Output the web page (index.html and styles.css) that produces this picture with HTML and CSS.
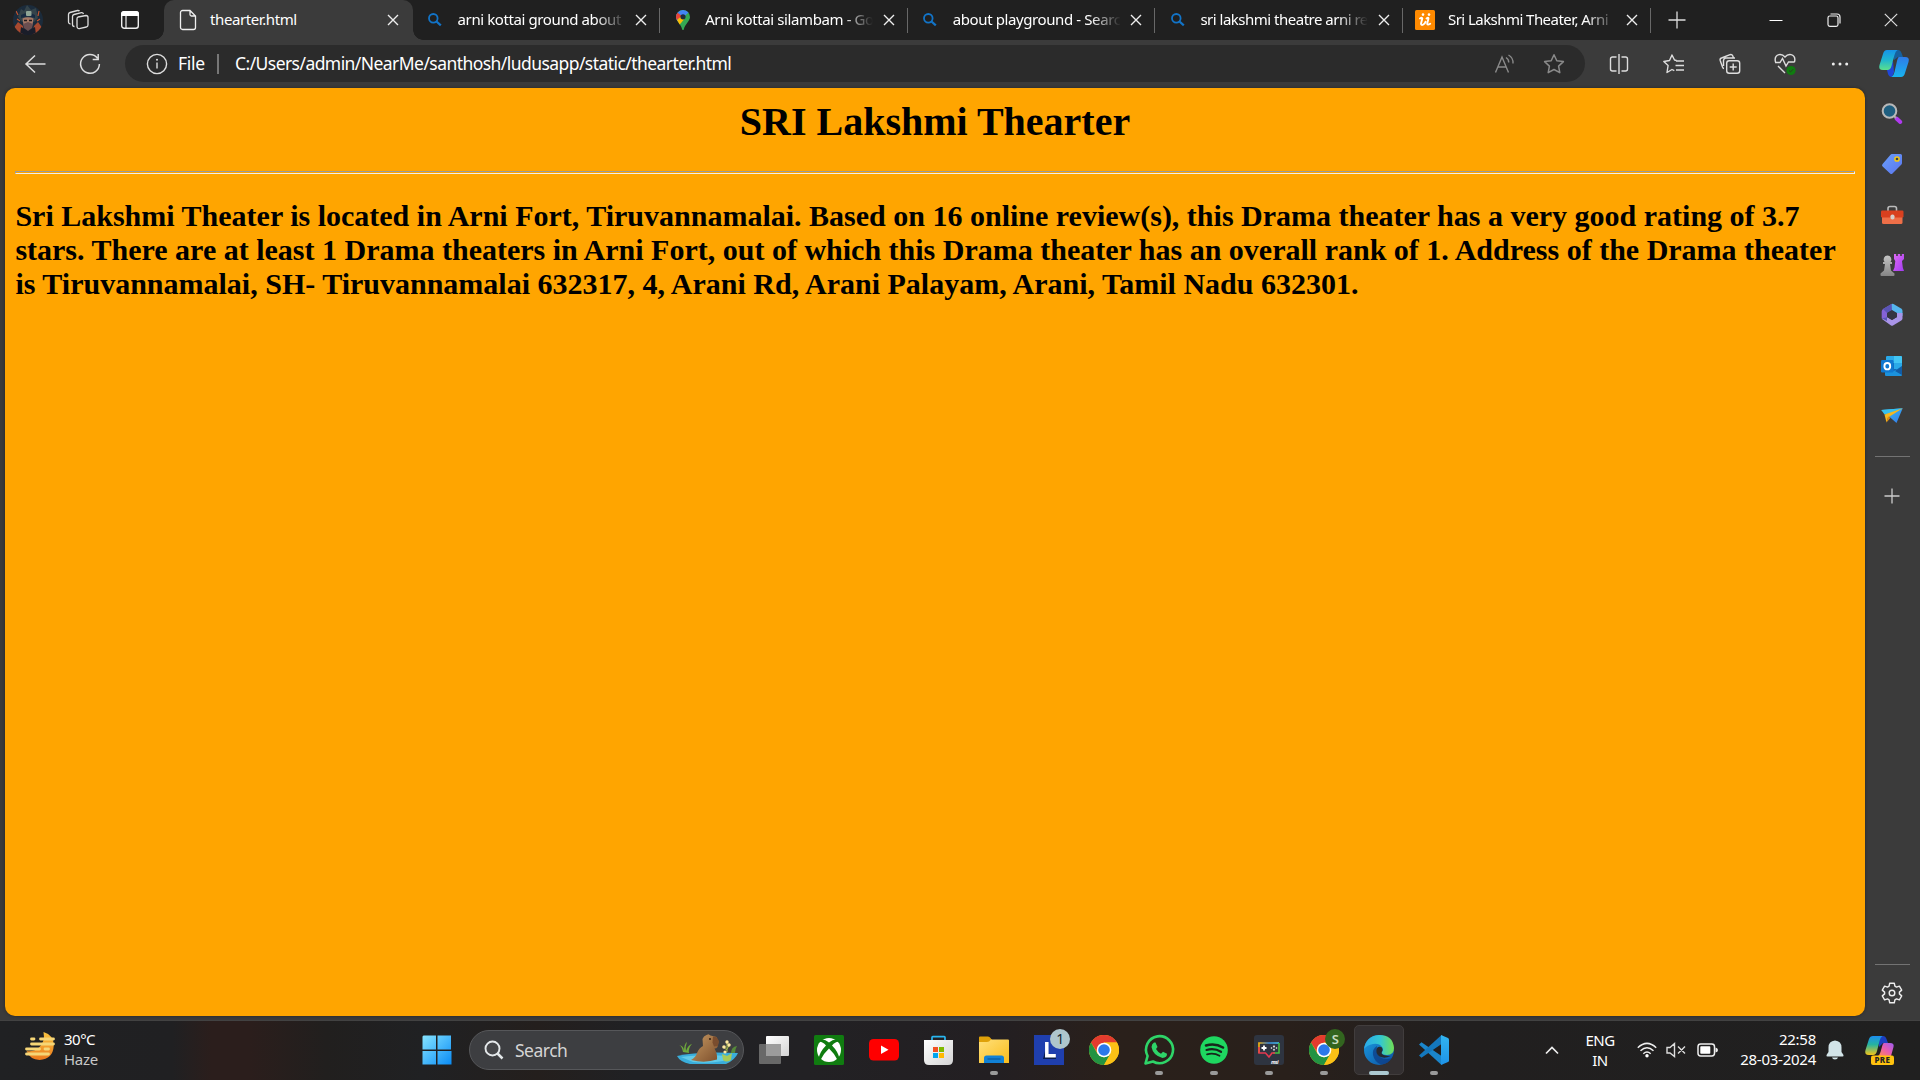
FILE: index.html
```html
<!DOCTYPE html>
<html lang="en">
<head>
<meta charset="utf-8">
<title>thearter.html</title>
<link rel="stylesheet" href="styles.css">
</head>
<body>
<svg class="defs" width="0" height="0" aria-hidden="true">
  <defs>
    <linearGradient id="cpBlue" x1="0" y1="0" x2="0" y2="1"><stop offset="0" stop-color="#1693e8"/><stop offset=".5" stop-color="#1fb5cf"/><stop offset="1" stop-color="#5be08c"/></linearGradient>
    <linearGradient id="cpRight" x1="0" y1="0" x2="0" y2="1"><stop offset="0" stop-color="#2f7be8"/><stop offset="1" stop-color="#18b4ef"/></linearGradient>
    <linearGradient id="cpRain" x1="0" y1="0" x2="0" y2="1"><stop offset="0" stop-color="#1b8df0"/><stop offset=".45" stop-color="#25b4a0"/><stop offset="1" stop-color="#f5c518"/></linearGradient>
    <linearGradient id="cpPink" x1="1" y1="0" x2="0" y2="1"><stop offset="0" stop-color="#9b5cf0"/><stop offset=".5" stop-color="#e85cb0"/><stop offset="1" stop-color="#ff8a50"/></linearGradient>
    <linearGradient id="win" x1="0" y1="0" x2="1" y2="1"><stop offset="0" stop-color="#86e4ff"/><stop offset="1" stop-color="#0a8cf5"/></linearGradient>
    <linearGradient id="tag" x1="0" y1="0" x2="1" y2="1"><stop offset="0" stop-color="#6aa0fa"/><stop offset="1" stop-color="#5a74ee"/></linearGradient>
    <linearGradient id="purple" x1="0" y1="0" x2="1" y2="1"><stop offset="0" stop-color="#e06cf5"/><stop offset="1" stop-color="#a23cf0"/></linearGradient>
    <linearGradient id="grey" x1="0" y1="0" x2="0" y2="1"><stop offset="0" stop-color="#c4c4c4"/><stop offset="1" stop-color="#858585"/></linearGradient>
    <linearGradient id="white" x1="0" y1="0" x2="1" y2="1"><stop offset="0" stop-color="#fff"/><stop offset="1" stop-color="#d4d4d4"/></linearGradient>
    <linearGradient id="moon" x1="0" y1="0" x2="0" y2="1"><stop offset="0" stop-color="#f8c440"/><stop offset="1" stop-color="#ec7a1c"/></linearGradient>
    <linearGradient id="folder" x1="0" y1="0" x2="1" y2="1"><stop offset="0" stop-color="#ffe07a"/><stop offset="1" stop-color="#f9bc1c"/></linearGradient>
    <linearGradient id="edgeTop" x1="0" y1="0" x2="1" y2="0"><stop offset="0" stop-color="#2aa9ea"/><stop offset=".55" stop-color="#34c8cf"/><stop offset="1" stop-color="#72e052"/></linearGradient>
    <linearGradient id="edgeLow" x1="0" y1="0" x2="1" y2="1"><stop offset="0" stop-color="#1b9de2"/><stop offset="1" stop-color="#0c4fa0"/></linearGradient>
    <linearGradient id="vs" x1="0" y1="0" x2="0" y2="1"><stop offset="0" stop-color="#32b5f1"/><stop offset="1" stop-color="#1e93e8"/></linearGradient>
    <linearGradient id="fur" x1="0" y1="0" x2="1" y2="1"><stop offset="0" stop-color="#c79a63"/><stop offset="1" stop-color="#7d4f2c"/></linearGradient>
    <linearGradient id="plane" x1="0" y1="0" x2="1" y2="1"><stop offset="0" stop-color="#35c8f5"/><stop offset="1" stop-color="#3577ea"/></linearGradient>
    <linearGradient id="msi" x1="0" y1="0" x2="1" y2="0"><stop offset="0" stop-color="#f0b010"/><stop offset=".5" stop-color="#3c8ee0"/><stop offset="1" stop-color="#45c8f0"/></linearGradient>
    <radialGradient id="face"><stop offset="0" stop-color="#a07868"/><stop offset=".45" stop-color="#5a4548"/><stop offset="1" stop-color="#16283a"/></radialGradient>
    <clipPath id="round"><circle cx="15" cy="15" r="15"/></clipPath>
    <symbol id="close" viewBox="0 0 12 12"><path d="M1 1l10 10M11 1L1 11" fill="none" stroke="#eee" stroke-width="1.4"/></symbol>
    <symbol id="bing" viewBox="0 0 14 14"><circle cx="5.3" cy="5.3" r="4.3" fill="none" stroke="#1274c8" stroke-width="1.8"/><path d="M8.5 8.5L12.8 12.4" stroke="#1274c8" stroke-width="2.2"/></symbol>
    <symbol id="chrome" viewBox="0 0 30 30">
      <circle cx="15" cy="15" r="15" fill="#fbc116"/>
      <path d="M2 7.5A15 15 0 0 1 28 7.5H15L9 18.5z" fill="#e33b2e"/>
      <path d="M2 7.5L8.5 18.7L15 22.5L21.5 18.7L15 30A15 15 0 0 1 2 7.5z" fill="#229342"/>
      <path d="M28 7.5H15l6.5 11.2L15 30A15 15 0 0 0 28 7.5z" fill="#fbc116"/>
      <circle cx="15" cy="15" r="7.3" fill="#fff"/><circle cx="15" cy="15" r="5.8" fill="#2b78ea"/>
    </symbol>
  </defs>
</svg>

<div class="titlebar">
  <div class="tb-cell tb-avatar"><svg width="30" height="30" viewBox="0 0 30 30"><g clip-path="url(#round)"><rect width="30" height="30" fill="#1b2b3b"/><path d="M0 24l5-7 5 4 1 9H0zM30 24l-5-7-4 4-2 9h11z" fill="#a8492f"/><path d="M7 30l1-8 7 4 7-4 1 8z" fill="#1a1d29"/><path d="M5 12l3-8 3 2 3-6 4 5 5-2 2 10-4 4H9z" fill="#34434a"/><path d="M8 10q7-4 14 0v3q-7-3-14 0z" fill="#172a42"/><rect x="13" y="6" width="5.500" height="5" rx="1" fill="#8fa596"/><path d="M9.500 13.500q5.500-2.500 11 0l-1 6.500-4.500 4-4.500-4z" fill="#a57866"/><path d="M10 19l5-2 5 2-1 4-4 3-4-3z" fill="#6a4e50"/><path d="M11 15.500h3M16 15.500h3" stroke="#21191c" stroke-width="1.300"/><path d="M3 6l2 4M26 6l-1 5M4 14l3 2M27 14l-3 2" stroke="#c4552f" stroke-width="1.200"/></g></svg></div>
  <div class="tb-cell tb-work"><svg width="22" height="22" viewBox="0 0 22 22" fill="none" stroke="#ddd" stroke-width="1.300"><path d="M11 8l8-1.500a2 2 0 0 1 2 2v7.500a2 2 0 0 1-1.700 2l-7 1.600a2 2 0 0 1-2.300-2V10a2 2 0 0 1 1-2z"/><path d="M7.500 17.500a2 2 0 0 1-2-2V7.500a2 2 0 0 1 1.500-2l7.500-1.800q1.500-.2 2 1.300"/><path d="M3.500 15a2 2 0 0 1-2-2V5.500a2 2 0 0 1 1.500-2L10.500 1.500q1.500-.1 2 .7"/></svg></div>
  <div class="tb-cell tb-actions"><svg width="20" height="20" viewBox="0 0 20 20"><rect x="1.700" y="1.700" width="16.600" height="16.600" rx="2.500" fill="none" stroke="#eee" stroke-width="1.400"/><path d="M1 6V4a3 3 0 0 1 3-3h12a3 3 0 0 1 3 3v2z" fill="#fff"/><path d="M6 6v12" stroke="#eee" stroke-width="1.200"/></svg></div>
  <div class="tabs">
    <div class="tab tab-active"><span class="tab-icon"><svg width="18" height="22" viewBox="0 0 18 22" fill="none" stroke="#eee" stroke-width="1.300"><path d="M3.500 1.500h7.500l5.500 5.500v11.500a2 2 0 0 1-2 2h-11a2 2 0 0 1-2-2v-15a2 2 0 0 1 2-2zM11 1.500v4a1.500 1.500 0 0 0 1.500 1.500h4"/></svg></span><span class="tab-title">thearter.html</span><svg class="tab-close" width="12" height="12"><use href="#close"/></svg></div>
    <div class="tab"><span class="tab-icon"><svg width="14" height="14"><use href="#bing"/></svg></span><span class="tab-title fade">arni kottai ground about</span><svg class="tab-close" width="12" height="12"><use href="#close"/></svg></div>
    <div class="tab"><span class="tab-icon"><svg width="14" height="20" viewBox="0 0 14 20"><path d="M7 0a7 7 0 0 1 7 7c0 4-5 7-6.200 12.500Q7 20.500 6.200 19.500C5 14 0 11 0 7a7 7 0 0 1 7-7z" fill="#34a853"/><path d="M1.500 2.700A7 7 0 0 1 12.500 2.500L2.500 12Q0 9.500 0 7q0-2.500 1.500-4.300z" fill="#4285f4"/><path d="M1.500 2.700L6 6 1 10Q0 8.500 0 7q0-2.500 1.500-4.300z" fill="#ea4335"/><path d="M1 10L5 6.500l3 3-4.300 5z" fill="#fbbc04"/><circle cx="7" cy="6.800" r="2.600" fill="#202d3d"/></svg></span><span class="tab-title fade">Arni kottai silambam - Go</span><svg class="tab-close" width="12" height="12"><use href="#close"/></svg></div>
    <div class="tab"><span class="tab-icon"><svg width="14" height="14"><use href="#bing"/></svg></span><span class="tab-title fade">about playground - Searc</span><svg class="tab-close" width="12" height="12"><use href="#close"/></svg></div>
    <div class="tab"><span class="tab-icon"><svg width="14" height="14"><use href="#bing"/></svg></span><span class="tab-title fade tight">sri lakshmi theatre arni re</span><svg class="tab-close" width="12" height="12"><use href="#close"/></svg></div>
    <div class="tab"><span class="tab-icon"><svg width="20" height="20" viewBox="0 0 20 20"><rect width="20" height="20" rx="1.500" fill="#ff8a00"/><path d="M5 8.500q2-1.500 2.300 0L6 13.500q0 2 2 1.200 2-1 2.500-3M11.500 8.500q2-1.500 2 0L12.200 13.500q0 2.200 3 .2" fill="none" stroke="#fff" stroke-width="1.900" stroke-linecap="round"/><circle cx="8" cy="4.600" r="1.300" fill="#fff"/><circle cx="14" cy="4.600" r="1.300" fill="#fff"/></svg></span><span class="tab-title fade tighter">Sri Lakshmi Theater, Arni</span><svg class="tab-close" width="12" height="12"><use href="#close"/></svg></div>
  </div>
  <div class="tb-cell tb-new"><svg width="18" height="18" viewBox="0 0 18 18"><path d="M9 .5v17M.5 9h17" stroke="#ddd" stroke-width="1.300"/></svg></div>
  <div class="win-controls">
    <span class="win-btn"><svg width="14" height="14" viewBox="0 0 14 14"><path d="M.5 7.500h13" stroke="#fff" stroke-width="1"/></svg></span>
    <span class="win-btn"><svg width="14" height="14" viewBox="0 0 14 14" fill="none" stroke="#eee" stroke-width="1.200"><rect x="1" y="3" width="10" height="10.300" rx="1.800"/><path d="M3.500 1h6.500a3 3 0 0 1 3 3v6.500"/></svg></span>
    <span class="win-btn"><svg width="14" height="14" viewBox="0 0 14 14"><path d="M.8 .8l12.400 12.400M13.200 .8L.8 13.200" stroke="#ddd" stroke-width="1.200"/></svg></span>
  </div>
</div>

<div class="toolbar">
  <div class="tool-cell nav-back"><svg width="22" height="20" viewBox="0 0 22 20" fill="none" stroke="#ddd" stroke-width="1.500"><path d="M11 1.500L2 10l9 8.500M2 10h19.500"/></svg></div>
  <div class="tool-cell nav-reload"><svg width="22" height="22" viewBox="0 0 22 22" fill="none" stroke="#ddd" stroke-width="1.500"><path d="M18.500 5.200A9.400 9.400 0 1 0 20.400 11M19.200 1v5.500h-5.500"/></svg></div>
  <div class="address">
    <svg class="info" width="22" height="22" viewBox="0 0 22 22"><circle cx="11" cy="11" r="9.600" fill="none" stroke="#ddd" stroke-width="1.400"/><path d="M11 9.500v6" stroke="#ddd" stroke-width="1.400"/><circle cx="11" cy="6.700" r="1" fill="#ddd"/></svg>
    <span class="scheme">File</span>
    <span class="address-sep"></span>
    <span class="url">C:/Users/admin/NearMe/santhosh/ludusapp/static/thearter.html</span>
    <svg class="read" width="22" height="20" viewBox="0 0 22 20" fill="none" stroke="#8a8a8a" stroke-width="1.400"><path d="M1.500 18.500L8 3l6.500 15.500M4 13h8M12 3.500q3 2 2.700 5M14.500 1q5 3 4.500 8.500"/></svg>
    <svg class="star" width="22" height="22" viewBox="0 0 22 22" fill="none" stroke="#8a8a8a" stroke-width="1.500" stroke-linejoin="round"><path d="M11 1.800l2.800 6 6.600.8-4.800 4.500 1.200 6.600L11 16.500l-5.800 3.200 1.200-6.600L1.600 8.600l6.600-.8z"/></svg>
  </div>
  <div class="tools">
    <span class="tool-cell"><svg width="20" height="20" viewBox="0 0 20 20" fill="none" stroke="#ddd" stroke-width="1.400"><path d="M7.500 3H3.500a2 2 0 0 0-2 2v10a2 2 0 0 0 2 2h4M12.500 3h4a2 2 0 0 1 2 2v10a2 2 0 0 1-2 2h-4M10 0v20"/></svg></span>
    <span class="tool-cell"><svg width="22" height="20" viewBox="0 0 22 20" fill="none" stroke="#ddd" stroke-width="1.400" stroke-linejoin="round"><path d="M13.500 6.500L11.500 6 9 1 6.500 6.500.8 7.500l4.300 4L4 18.500l5-3 2.300 1.200M13 7h8M12.500 11.500H21M13 16h8"/></svg></span>
    <span class="tool-cell"><svg width="22" height="22" viewBox="0 0 22 22" fill="none" stroke="#ddd" stroke-width="1.400"><rect x="7.700" y="7.700" width="13" height="12.600" rx="2.500"/><path d="M14.200 10.500v7M10.700 14h7M5 15.500q-1 0-1.500-1.500L1.200 7.500A2 2 0 0 1 2.500 5L11 1.700q2-.5 2.700 1L14.500 5M4.500 13V7.500q0-2 2-2.500L16 5"/></svg></span>
    <span class="tool-cell"><svg width="22" height="22" viewBox="0 0 22 22" fill="none" stroke="#ddd" stroke-width="1.400"><path d="M1.500 9Q0 3 5 1.600 8.500 1 11 4q2.500-3 6-2.400Q22 3 20.500 9M1 9.500h5L8.500 5.500 12 13l2.500-4h6M4 13l7 7"/><circle cx="17" cy="17.500" r="4.600" fill="#107c10" stroke="none"/><path d="M15 17.500l1.500 1.400 2.700-2.700" stroke="#2b3a24" stroke-width="1"/></svg></span>
    <span class="tool-cell"><svg width="18" height="6" viewBox="0 0 18 6" fill="#eee"><circle cx="2.300" cy="3" r="1.500"/><circle cx="9" cy="3" r="1.500"/><circle cx="15.700" cy="3" r="1.500"/></svg></span>
    <span class="tool-cell tool-copilot"><svg width="30" height="27" viewBox="0 0 30 27"><path d="M13 0h6q2.500 0 3.500 3L24 7h-5l-4 3z" fill="#16609e"/><path d="M8 20l6-9 1 11-2 5q-3 0-4-3z" fill="#1f46d8"/><path d="M8 0h10.500q-2 1-3 5l-3 11q-1 4-4 4H4Q-1 20 .5 15L4 4Q5 0 8 0z" fill="url(#cpBlue)"/><path d="M20 7h6q5 0 3.500 5l-3.500 11q-1 4-4 4h-9.500q2-1 3-5l2.500-11q1-4 2-4z" fill="url(#cpRight)"/></svg></span>
  </div>
</div>

<div class="browser-body">
  <div class="page">
    <h1>SRI Lakshmi Thearter</h1>
    <hr>
    <h2>Sri Lakshmi Theater is located in Arni Fort, Tiruvannamalai. Based on 16 online review(s), this Drama theater has a very good rating of 3.7 stars. There are at least 1 Drama theaters in Arni Fort, out of which this Drama theater has an overall rank of 1. Address of the Drama theater is Tiruvannamalai, SH- Tiruvannamalai 632317, 4, Arani Rd, Arani Palayam, Arani, Tamil Nadu 632301.</h2>
  </div>
  <div class="sidebar">
    <span class="side-cell"><svg width="22" height="22" viewBox="0 0 22 22"><path d="M15.500 15.500l3.800 3.500" stroke="#b03af0" stroke-width="4" stroke-linecap="round"/><path d="M12 12l3 3" stroke="#aaa" stroke-width="2"/><circle cx="8.500" cy="8" r="6.800" fill="#1f5f80" stroke="#b8b8b8" stroke-width="2"/></svg></span>
    <span class="side-cell"><svg width="22" height="22" viewBox="0 0 22 22"><path d="M11 1h8.500A1.500 1.500 0 0 1 21 2.500V10q0 1-.8 1.800l-8.700 8.700q-1.200 1-2.400 0l-7.500-7q-1.200-1.200 0-2.500L9.300 2Q10 1 11 1z" fill="url(#tag)"/><circle cx="16" cy="6" r="2.100" fill="#345" stroke="#f5c812" stroke-width="1.500"/></svg></span>
    <span class="side-cell"><svg width="24" height="20" viewBox="0 0 24 20"><path d="M8 6V3.500Q8 1.500 10 1.500h4.500q2 0 2 2V6" fill="none" stroke="#bbb" stroke-width="1.600"/><rect x="2" y="9" width="20.500" height="10" rx="1.500" fill="#ee6f48"/><rect x="1" y="5.500" width="22.500" height="7" rx="1.200" fill="#d9401f"/><rect x="10.500" y="9.500" width="4" height="5" rx="1.800" fill="#d6cfcb"/></svg></span>
    <span class="side-cell"><svg width="24" height="24" viewBox="0 0 24 24"><path d="M14 1h2.200v2h1.600V1h2.400v2h1.600V1H24v5l-2 2 .8 6.500 1.200 3.500H13l1.500-3.500.8-6.500L14 6z" fill="url(#purple)"/><path d="M7.500 2.500a4 4 0 0 1 3 6.500H12v2h-2l1 6.500 3.500 3v1.500q0 1-1 1H1.500q-1 0-1-1V20.500L4 17.500 5 11H3V9h1.500a4 4 0 0 1 3-6.500z" fill="url(#grey)"/></svg></span>
    <span class="side-cell"><svg width="22" height="22" viewBox="0 0 22 22"><path d="M10.500 0L2 5Q.7 6 .7 7.500v7L6 17V9l5-3z" fill="#8562d6"/><path d="M10.500 0q1-.5 2 0l8 4.700Q21.500 5.500 21.500 7v5L15 9l-5-3z" fill="#55b5ee"/><path d="M21.500 9v5.500q0 1.200-1.200 2L12 21.500q-1 .5-2 0L1 15l5-2 5 3 5-3V9z" fill="#a994e8"/><path d="M10.500 0L2 5l4 4 5-3zM1 14.500l5 2.500v-4z" fill="#5a55b5"/><path d="M11 6l5 3v4l-5 3-5-3V9z" fill="#353542"/></svg></span>
    <span class="side-cell"><svg width="22" height="22" viewBox="0 0 22 22"><rect x="5" y="1" width="16" height="18" rx="1" fill="#1268ba"/><path d="M6 1h7v7H5V2zM13 8h8v6h-8z" fill="#2aa9e8"/><path d="M13 1h7q1 0 1 1v6h-8z" fill="#42c5f3"/><path d="M4 20v-7l9 3 8-5v9q0 1-1 1H5q-1 0-1-1z" fill="#1b92dd"/><path d="M21 11l-7 5 7 4z" fill="#125ca5"/><rect x="0" y="5" width="12.500" height="12.500" rx="1.200" fill="#0f78d0"/><ellipse cx="6.300" cy="11.200" rx="2.900" ry="3.200" fill="none" stroke="#fff" stroke-width="1.900"/></svg></span>
    <span class="side-cell"><svg width="22" height="16" viewBox="0 0 22 16"><path d="M.3 2L21.700.3 15.500 15 9.500 9.800z" fill="url(#plane)"/><path d="M.3 2L21.700.3 3.500 6.500z" fill="#35c0f0"/><path d="M3.500 6.500L21.700.3 7 9.500 5.500 14.500z" fill="#f5b820"/><path d="M5.500 14.500l4-4.700L7 8.500z" fill="#e08b12"/></svg></span>
    <span class="side-line"></span>
    <span class="side-plus"><svg width="16" height="16" viewBox="0 0 16 16"><path d="M8 .5v15M.5 8h15" stroke="#ccc" stroke-width="1.300"/></svg></span>
    <span class="side-line side-line-low"></span>
    <span class="side-gear"><svg width="22" height="22" viewBox="0 0 22 22" fill="none" stroke="#eee" stroke-width="1.400" stroke-linejoin="round"><path d="M8.700 1.200h4.600l.6 3 1.600.9 2.900-1 2.300 4-2.300 2v1.800l2.300 2-2.300 4-2.900-1-1.600.9-.6 3H8.700l-.6-3-1.600-.9-2.900 1-2.300-4 2.300-2v-1.800l-2.300-2 2.300-4 2.900 1 1.600-.9z"/><circle cx="11" cy="11" r="2.800"/></svg></span>
  </div>
</div>

<div class="taskbar">
  <div class="weather">
    <svg width="30" height="30" viewBox="0 0 30 30"><path d="M18.500 0Q29 3 28.700 14 28 27 14.500 28 5 27.500 1.500 19q7 1 12-3 7-6 5-16z" fill="url(#moon)"/><path d="M6.500 7h2.500M15.500 7h13M6.500 12h22M1.500 17h13M20 17h3.500M1.500 22h22" stroke="#f5d677" stroke-width="2.800" stroke-linecap="round"/></svg>
    <div class="weather-text"><span>30°C</span><span class="dim">Haze</span></div>
  </div>
  <div class="task-cell start"><svg width="30" height="30" viewBox="0 0 30 30"><path d="M1.500 .5H14v14H.5v-13zM15.500.5h13.500v14H15.500zM.5 16H14v13.500H.5zM15.500 16H29.500v13.500h-14z" fill="url(#win)"/></svg></div>
  <div class="search">
    <svg class="lens" width="20" height="20" viewBox="0 0 20 20"><circle cx="8.500" cy="8.500" r="7" fill="#454649" stroke="#e4e8ea" stroke-width="1.900"/><path d="M13.500 13.500L18.500 18.500" stroke="#e4e8ea" stroke-width="2.500"/></svg>
    <span>Search</span>
    <svg class="capybara" width="62" height="32" viewBox="0 0 62 32"><path d="M0 22q20-5 61-3-3 7-12 11H13Q3 28 0 22z" fill="#3aaedb"/><path d="M4 23q20-3 50-1l-8 5q-15 3-30 1z" fill="#62cbe8"/><path d="M6 18Q5 12 2 11q5 1 5 6 0-7 3-9-2 5-1 9 2-6 6-7-4 4-3 9z" fill="#6ea83c"/><path d="M54 19q0-6 6-7-2 3-2 7z" fill="#56883a"/><path d="M14 26q5-3 6-7 2-5 6-7l-.5-7q1-3 4-4l2-.8 2 1.300 6 1.500 2 5-1 5q-1 1.500-3 1.500 3 5 2.500 11-12 4-26 .5z" fill="url(#fur)"/><path d="M36 2.500l3.500.5 2.500 4-1 5-4 .5-1.500-4z" fill="#7a4d2e"/><circle cx="33" cy="5" r=".9" fill="#24140c"/><path d="M50 18V9M50 16l-4-3M50 15l3-5" stroke="#a3b94d" stroke-width="1"/><g fill="#ffe9a0"><circle cx="50" cy="8" r="1.700"/><circle cx="47" cy="13" r="1.800"/><circle cx="52" cy="11" r="1.700"/><circle cx="48" cy="18" r="1.600"/></g><path d="M45 20l5 2 5-3-1 7q-5 3-8 0z" fill="#a7ca58"/></svg>
  </div>
  <div class="apps">
    <span class="task-cell"><svg width="30" height="28" viewBox="0 0 30 28"><rect x="7" width="23" height="20" rx="1" fill="url(#white)"/><rect y="8" width="22" height="20" rx="1" fill="#686868"/><rect x="7" y="8" width="15" height="12" fill="#9c9c9c"/></svg></span>
    <span class="task-cell"><svg width="30" height="30" viewBox="0 0 30 30"><rect width="30" height="30" rx="1.500" fill="#107c10"/><circle cx="15" cy="15" r="12" fill="#fff"/><path d="M6 5q4-1.500 9 2.500Q20 3.500 24 5l1.500 2Q22 6 18 10.500q6 6 7.500 13l-2 1.500Q20 18 15 13.500 10 18 6.500 25l-2-1.500q1.500-7 7.500-13Q8 6 4.500 7z" fill="#107c10"/></svg></span>
    <span class="task-cell"><svg width="30" height="22" viewBox="0 0 30 22"><rect width="30" height="21.500" rx="4.500" fill="#f00"/><path d="M12 6.500l7.500 4.300-7.500 4.300z" fill="#fff"/></svg></span>
    <span class="task-cell"><svg width="30" height="30" viewBox="0 0 30 30"><path d="M8 7V2.500Q8 1.700 8.800 1.700h11.400q.8 0 .8.800V7" fill="none" stroke="#29b6f0" stroke-width="1.700"/><path d="M0 5h29v20q0 5-5 5H5q-5 0-5-5z" fill="url(#white)"/><path d="M9 12h5v5H9z" fill="#f25022"/><path d="M15 12h5v5h-5z" fill="#7fba00"/><path d="M9 18h5v5H9z" fill="#00a4ef"/><path d="M15 18h5v5h-5z" fill="#ffb900"/></svg></span>
    <span class="task-cell"><svg width="30" height="28" viewBox="0 0 30 28"><path d="M0 1.500Q0 .500 1 .500h8q1.500 0 2.500 1.500L13 4v5H0z" fill="#dfa109"/><path d="M0 6h8q2 0 4-2.500h17q1 0 1 1V27H0z" fill="url(#folder)"/><path d="M5 27v-5q0-2.500 2.500-2.500h15q2.500 0 2.500 2.500v5z" fill="#1181d6"/><path d="M8.500 23h13" stroke="#0b5a9c" stroke-width="1.200"/></svg><i class="run"></i></span>
    <span class="task-cell"><svg width="30" height="30" viewBox="0 0 30 30"><rect width="30" height="30" fill="#1f3fae"/><path d="M9 24L13 8v14h9v2z" fill="#0b1d4d"/><path d="M12.800 7v13.800h9" fill="none" stroke="#fff" stroke-width="3.500"/></svg><b class="badge">1</b></span>
    <span class="task-cell"><svg width="30" height="30"><use href="#chrome"/></svg></span>
    <span class="task-cell"><svg width="30" height="30" viewBox="0 0 30 30"><path d="M1.500 28.500L3.600 21A13.500 13.500 0 1 1 9 26.500z" fill="none" stroke="#2ed468" stroke-width="2.600" stroke-linejoin="round"/><path d="M10 7.500h1.500l2 4.500-1.500 2q2 3.500 5 4.800l2-2 4 2q.2 4-4.500 4.200Q9 20.500 7.500 12q.3-3.500 2.500-4.500z" fill="#2ed468"/></svg><i class="run"></i></span>
    <span class="task-cell"><svg width="28" height="28" viewBox="0 0 28 28"><circle cx="14" cy="14" r="13.800" fill="#1ed760"/><g fill="none" stroke="#17251b" stroke-linecap="round"><path d="M6 9.500q9-2.700 17 2" stroke-width="2.600"/><path d="M6.500 14q8-2.200 14.500 1.800" stroke-width="2.200"/><path d="M7 18.300q7-1.800 12.500 1.500" stroke-width="1.800"/></g></svg><i class="run"></i></span>
    <span class="task-cell"><svg width="30" height="30" viewBox="0 0 30 30"><rect width="30" height="30" rx="3" fill="#2e3440"/><path d="M5 18V7.990L25 8.010" fill="none" stroke="url(#msi)" stroke-width="1.700"/><path d="M25 8v10h-6" fill="none" stroke="#45c040" stroke-width="1.600"/><path d="M5 12v6h6.500l3.500 4 3-4h3" fill="none" stroke="#e53950" stroke-width="1.600"/><path d="M10 10.500v5M7.500 13h5" stroke="#fff" stroke-width="1.800"/><path d="M20 10l1.200 1.500L20 13l-1.200-1.500zM20 13.500l1.200 1.300L20 16l-1.200-1.200zM17.500 12l1 1-1 1-1-1zM22.500 12l1 1-1 1-1-1z" fill="#ddd"/><text class="msi" x="17" y="28.500">msi</text></svg><i class="run"></i></span>
    <span class="task-cell"><svg width="30" height="30"><use href="#chrome"/></svg><b class="badge badge-s">S</b><i class="run"></i></span>
    <span class="task-cell task-on"><svg width="30" height="30" viewBox="0 0 30 30"><circle cx="15" cy="15" r="15" fill="url(#edgeLow)"/><path d="M0 14Q2 1 15 0 29 0 30 13q0 7-7 7-6 0-5-3 2-2 0-5-3-4-9-3-6 1-9 5z" fill="url(#edgeTop)"/><path d="M13 11q-5 3-4 9 1.500 7 8 9.500 7-.5 11-6.500-7 2.500-12-1-4.500-4-3-11z" fill="#0e3d85" opacity=".75"/><path d="M18 12.500q-4-2-5.500 1.500-1 5 3 7.500 5 2.500 11-.5-6 0-8.500-2-1-1 0-2.500 1-2 0-4z" fill="#272a30"/></svg><i class="run run-on"></i></span>
    <span class="task-cell"><svg width="30" height="30" viewBox="0 0 30 30"><path d="M0 9.500L2.500 7.300 24 22V29L22 29.500z" fill="#1b86cb"/><path d="M0 20.500l2.500 2.200L24 8V1L22 .5z" fill="#1478bd"/><path d="M22 0l7 3q1 .5 1 1.500v21q0 1-1 1.500l-7 3z" fill="url(#vs)"/></svg><i class="run"></i></span>
  </div>
  <div class="tray">
    <svg class="chevron" width="14" height="9" viewBox="0 0 14 9"><path d="M1 7.500l6-6 6 6" fill="none" stroke="#eee" stroke-width="1.700"/></svg>
    <div class="lang"><span>ENG</span><span>IN</span></div>
    <svg class="wifi" width="20" height="16" viewBox="0 0 20 16" fill="none" stroke="#eee" stroke-width="1.500"><path d="M.8 5.700q9.200-8.600 18.400 0M3.500 8.800q6.500-6 13 0M6.300 11.700q3.700-3.300 7.400 0"/><circle cx="10" cy="13.700" r="1.700" fill="#fff" stroke="none"/></svg>
    <svg class="vol" width="20" height="16" viewBox="0 0 20 16" fill="none" stroke="#ddd" stroke-width="1.400"><path d="M1 5.500h3l4.500-4v13L4 11H1zM12 4.500l7 7M19 4.500l-7 7"/></svg>
    <svg class="batt" width="21" height="14" viewBox="0 0 21 14"><rect x="1" y="1" width="16.500" height="12" rx="2.700" fill="none" stroke="#eee" stroke-width="1.500"/><rect x="3.300" y="3.300" width="10" height="7.400" rx=".8" fill="#fff"/><path d="M18.500 4.500q2.500.5 2.500 2.500t-2.500 2.500z" fill="#eee"/></svg>
    <div class="clock"><span>22:58</span><span>28-03-2024</span></div>
    <svg class="bell" width="18" height="20" viewBox="0 0 18 20"><path d="M9 .5q6.500.5 6.500 7V12l2 3q.3 1.500-1 1.500h-15Q.2 16.500.5 15l2-3V7.500Q2.500 1 9 .5zM6 17.500h6Q11.500 19.500 9 19.500T6 17.500z" fill="#d2e4e8"/></svg>
    <svg class="preview" width="30" height="29" viewBox="0 0 30 29"><path d="M13 0h5q2.500 0 3.500 3l1.500 4h-5l-4 4z" fill="#1b3fc0"/><path d="M8 0h9.500q-2 1-3 5l-2.500 10q-1 4-4 4H4Q-1 19 .5 14L4 3Q5 0 8 0z" fill="url(#cpRain)"/><path d="M19 7h6q4.500 0 3.500 4l-2.500 9H13q1.500-1 2.500-4l2-7q.5-2 1.500-2z" fill="url(#cpPink)"/><rect x="6" y="19.500" width="23" height="9.500" rx="2" fill="#ffc20e"/><text class="pre" x="9.500" y="27">PRE</text></svg>
  </div>
</div>
</body>
</html>
```

FILE: styles.css
```css
* { box-sizing: border-box; }

body {
  margin: 0;
  width: 1920px;
  height: 1080px;
  overflow: hidden;
  display: flex;
  flex-direction: column;
  background: #3b3b3b;
  color: #fff;
  font-family: "Noto Sans", "Open Sans", sans-serif;
}

svg { display: block; flex: none; overflow: visible; }
.defs { position: absolute; }

/* Title bar */
.titlebar { display: flex; height: 40px; flex: none; background: #202020; }
.tb-cell { display: flex; align-items: center; justify-content: center; flex: none; }
.tb-avatar { width: 56px; }
.tb-work { width: 43px; }
.tb-actions { width: 61px; }
.tb-new { width: 54px; padding-bottom: 1px; }
.tabs { display: flex; width: 1490px; flex: none; padding-left: 4px; }
.tab {
  display: flex;
  align-items: center;
  width: 247.600px;
  flex: none;
  padding-right: 13px;
  background: linear-gradient(#686868, #686868) right 8px / 1px 25px no-repeat;
}
.tab-active {
  position: relative;
  width: 248.600px;
  padding-right: 14px;
  background: #3b3b3b;
  border-radius: 10px 10px 0 0;
}
.tab-active::before,
.tab-active::after {
  content: "";
  position: absolute;
  bottom: 0;
  width: 10px;
  height: 10px;
}
.tab-active::before { left: -10px; background: radial-gradient(circle at 0 0, transparent 9.500px, #3b3b3b 10px); }
.tab-active::after { right: -10px; background: radial-gradient(circle at 100% 0, transparent 9.500px, #3b3b3b 10px); }
.tab-icon { display: flex; justify-content: center; width: 45px; flex: none; }
.tab-active .tab-icon { width: 46px; padding-left: 2px; }
.tab-title {
  flex: none;
  width: 168px;
  white-space: nowrap;
  font-size: 15px;
  line-height: 22px;
  letter-spacing: -0.400px;
  padding-bottom: 2px;
}
.tight { letter-spacing: -0.500px; }
.tighter { letter-spacing: -0.550px; }
.fade { mask-image: linear-gradient(90deg, #000 82%, transparent 100%); }
.tab-close { margin-left: auto; }
.win-controls { display: flex; margin-left: auto; }
.win-btn { display: flex; align-items: center; justify-content: center; width: 57.500px; padding-bottom: 1px; }

/* Toolbar */
.toolbar { display: flex; height: 48px; flex: none; align-items: flex-start; padding: 5px 0 0; }
.tool-cell { display: flex; align-items: center; justify-content: center; width: 55.300px; height: 37px; flex: none; }
.nav-back { width: 69px; }
.nav-reload { width: 41px; }
.address {
  display: flex;
  align-items: center;
  width: 1460px;
  height: 37px;
  margin-left: 15px;
  padding: 0 20px 0 21px;
  border-radius: 19px;
  background: #2b2b2b;
  font-size: 17.500px;
}
.scheme { width: 39px; margin-left: 10px; letter-spacing: -0.300px; padding-bottom: 1px; }
.address-sep { width: 2px; height: 20px; background: #777; }
.url { margin-left: 16px; letter-spacing: -0.560px; white-space: nowrap; padding-bottom: 1px; }
.read { margin-left: auto; }
.star { margin-left: 27px; }
.tools { display: flex; margin-left: 6.500px; }
.tool-copilot { width: 52px; }

/* Page and sidebar */
.browser-body { display: flex; height: 932px; flex: none; }
.page {
  width: 1860px;
  height: 928px;
  margin-left: 5px;
  padding: 11px 10px 10px;
  border-radius: 10px;
  background: #ffa500;
  box-shadow: 0 0 3px #242424;
  color: #000;
  font-family: "Liberation Serif", serif;
}
.page h1 { margin: 0 0 26px; font-size: 40px; line-height: 46px; text-align: center; }
.page hr { height: 3px; margin: 0 0 25px; border: 1px solid; border-color: #9a9a9a #eee #eee #9a9a9a; }
.page h2 { margin: 0; font-size: 30px; line-height: 34px; padding-left: 0.400px; }
.sidebar { display: flex; flex-direction: column; align-items: center; width: 54px; padding-top: 1px; }
.side-cell { display: flex; align-items: center; justify-content: center; height: 50.300px; width: 35px; }
.side-line { width: 35px; height: 1px; margin-top: 15px; background: #737373; }
.side-plus { margin-top: 31px; }
.side-line-low { margin-top: auto; }
.side-gear { margin: 17px 0 16px; }

/* Taskbar */
.taskbar {
  display: flex;
  align-items: center;
  height: 60px;
  flex: none;
  border-top: 1px solid #424242;
  background: linear-gradient(90deg, #202123 0, #202022 9%, #2b1e1c 11%, #2b1e1c 13%, #211f1e 17%, #202123 22%, #241f1d 28%, #202124 33%, #222124 42%, #231f22 52%, #2a201b 58%, #29201b 67%, #211f1f 76%, #202020 100%);
  padding-bottom: 1px;
  font-size: 15px;
  letter-spacing: -0.500px;
}
.weather { display: flex; width: 410px; padding-left: 25px; }
.weather-text { display: flex; flex-direction: column; margin-left: 9px; line-height: 20px; margin-top: -3px; }
.dim { color: #c8c8c8; letter-spacing: -0.300px; }
.task-cell { position: relative; display: flex; align-items: center; justify-content: center; width: 50px; height: 50px; margin-right: 5px; flex: none; }
.start { margin-right: 9px; }
.weather + .start { margin-left: 2px; }
.search {
  display: flex;
  align-items: center;
  width: 275px;
  height: 40px;
  margin-left: -2px;
  padding: 0 4px 0 14px;
  border: 1px solid #56575a;
  border-radius: 20px;
  background: #3d3e41;
  color: #d4d4d4;
  font-size: 17.500px;
}
.search span { margin-left: 11px; }
.capybara { margin-left: auto; }
.apps { display: flex; margin-left: 5px; }
.task-on { border: 1px solid #413d3d; border-radius: 5px; background: #332f30; }
.run { position: absolute; bottom: 0; left: 21px; width: 8px; height: 4px; border-radius: 2px; background: #9a9a9a; }
.run-on { left: 14px; bottom: -1px; width: 20px; background: #acc9d1; }
.badge {
  position: absolute;
  top: 4px;
  left: 26px;
  width: 20px;
  height: 20px;
  border-radius: 50%;
  background: #aec6cc;
  color: #16232b;
  font-size: 14px;
  font-weight: 400;
  line-height: 20px;
  text-align: center;
}
.badge-s { background: #32651f; color: #c9dcc0; font-size: 13px; font-weight: 600; }
.msi { font: italic 700 5px "Noto Sans", sans-serif; fill: #fff; }
.pre { font: 800 8px "Noto Sans", sans-serif; letter-spacing: 0.300px; fill: #222; }
.tray { display: flex; align-items: center; margin-left: auto; padding-right: 25px; line-height: 20px; }
.lang { display: flex; flex-direction: column; align-items: center; width: 30px; margin-left: 26px; padding-bottom: 1px; }
.wifi { margin-left: 22px; }
.vol { margin-left: 9px; }
.batt { margin-left: 11px; }
.clock { display: flex; flex-direction: column; align-items: flex-end; width: 80px; margin-left: 18px; padding-bottom: 2px; white-space: nowrap; letter-spacing: -0.250px; }
.bell { margin-left: 10px; }
.preview { margin-left: 21px; }
```
